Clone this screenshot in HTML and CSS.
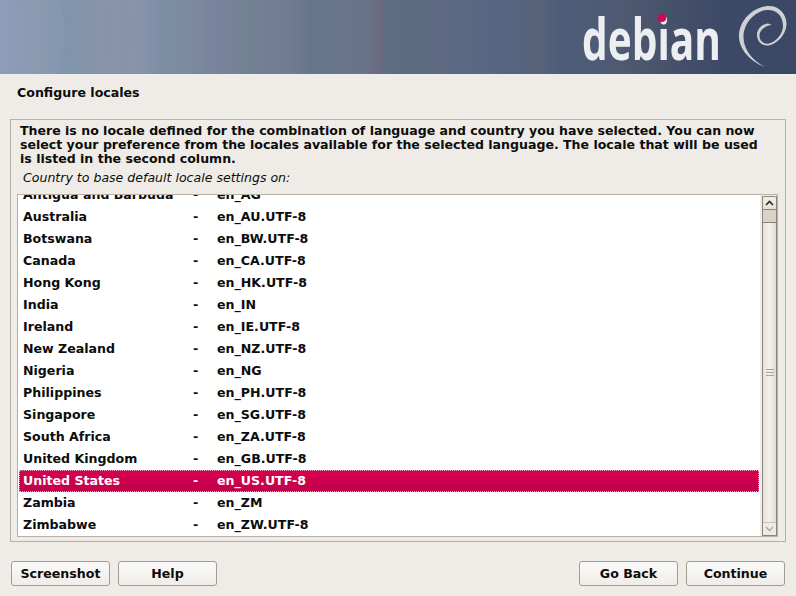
FILE: index.html
```html
<!DOCTYPE html>
<html lang="en">
<head>
<meta charset="utf-8">
<title>Configure locales</title>
<link rel="stylesheet" href="styles.css">
</head>
<body>
<div class="app">
  <header class="banner">
    <div class="bands"></div>
    <svg class="logo" width="220" height="74" viewBox="0 0 220 74" role="img" aria-label="debian">
      <text class="wordmark" x="6" y="60" textLength="139" lengthAdjust="spacingAndGlyphs">debian</text>
      <circle cx="86" cy="18" r="4" fill="#d0074f"/>
      <path class="swirl" d="M189 67C175 62 163.500 50 163 37C162.500 22 175 8 191 6C202 5 210.500 13 210.500 24C210.500 33 203 43 193 45.500C186 46.500 181 41 181 35C181 29 186 24 192 23.500L196 25C191 25 184 29 183.500 35C183 41 188 44.500 193 43.500C201 41.500 207.500 33 207 25C206.500 15 200 9.500 191 10C178 11 167.500 24 167.500 37C167.500 50 177 61 189 67Z"/>
    </svg>
  </header>
  <div class="stripe"></div>
  <h1 class="title">Configure locales</h1>
  <main class="frame">
    <p class="message">There is no locale defined for the combination of language and country you have selected. You can now select your preference from the locales available for the selected language. The locale that will be used is listed in the second column.</p>
    <p class="prompt">Country to base default locale settings on:</p>
    <div class="listbox">
      <div class="viewport">
        <div class="rows">
          <div class="row"><span class="country">Antigua and Barbuda</span><span class="dash">-</span><span>en_AG</span></div>
          <div class="row"><span class="country">Australia</span><span class="dash">-</span><span>en_AU.UTF-8</span></div>
          <div class="row"><span class="country">Botswana</span><span class="dash">-</span><span>en_BW.UTF-8</span></div>
          <div class="row"><span class="country">Canada</span><span class="dash">-</span><span>en_CA.UTF-8</span></div>
          <div class="row"><span class="country">Hong Kong</span><span class="dash">-</span><span>en_HK.UTF-8</span></div>
          <div class="row"><span class="country">India</span><span class="dash">-</span><span>en_IN</span></div>
          <div class="row"><span class="country">Ireland</span><span class="dash">-</span><span>en_IE.UTF-8</span></div>
          <div class="row"><span class="country">New Zealand</span><span class="dash">-</span><span>en_NZ.UTF-8</span></div>
          <div class="row"><span class="country">Nigeria</span><span class="dash">-</span><span>en_NG</span></div>
          <div class="row"><span class="country">Philippines</span><span class="dash">-</span><span>en_PH.UTF-8</span></div>
          <div class="row"><span class="country">Singapore</span><span class="dash">-</span><span>en_SG.UTF-8</span></div>
          <div class="row"><span class="country">South Africa</span><span class="dash">-</span><span>en_ZA.UTF-8</span></div>
          <div class="row"><span class="country">United Kingdom</span><span class="dash">-</span><span>en_GB.UTF-8</span></div>
          <div class="row selected"><span class="country">United States</span><span class="dash">-</span><span>en_US.UTF-8</span></div>
          <div class="row"><span class="country">Zambia</span><span class="dash">-</span><span>en_ZM</span></div>
          <div class="row"><span class="country">Zimbabwe</span><span class="dash">-</span><span>en_ZW.UTF-8</span></div>
        </div>
      </div>
      <div class="gutter">
        <div class="scrollbar">
          <div class="step step-up">
            <svg width="9" height="6" viewBox="0 0 9 6"><path d="M1 5L4.500 1.500L8 5" class="arrow"/></svg>
          </div>
          <div class="trough"></div>
          <div class="thumb">
            <span class="grip"></span><span class="grip"></span><span class="grip"></span>
          </div>
          <div class="step step-down">
            <svg width="9" height="6" viewBox="0 0 9 6"><path d="M1 1L4.500 4.500L8 1" class="arrow-dim"/></svg>
          </div>
        </div>
      </div>
    </div>
  </main>
  <footer class="actions">
    <button class="btn" type="button">Screenshot</button>
    <button class="btn" type="button">Help</button>
    <button class="btn push" type="button">Go Back</button>
    <button class="btn" type="button">Continue</button>
  </footer>
</div>
</body>
</html>
```
FILE: styles.css
```css
* { box-sizing: border-box; }
html, body { margin: 0; padding: 0; }
body {
  background: #efece7;
  font-family: "DejaVu Sans", sans-serif;
  font-size: 12.6px;
  font-weight: 700;
  color: #0c0c0c;
}
.app { width: 796px; height: 596px; display: flex; flex-direction: column; overflow: hidden; }

.banner {
  position: relative;
  flex: none;
  height: 74px;
  display: flex;
  justify-content: flex-end;
  overflow: hidden;
  background: linear-gradient(90deg,
    #8c9bb8 0, #8a99b0 40px, #8197ae 68px, #8a94a9 110px, #8590aa 145px, #7a8ca1 165px,
    #7a8b9d 190px, #7a829d 215px, #738393 240px, #717b94 290px, #667689 310px, #687389 370px,
    #6b6a80 378px, #5e6d80 388px, #5d6a82 440px, #566581 500px, #59637a 540px, #4d5d78 560px,
    #4f5a72 620px, #444f69 680px, #3d4a67 720px, #3a4865 796px);
}
.bands {
  position: absolute;
  inset: 0;
  background: radial-gradient(circle at -20px 34px,
    rgba(255,255,255,.03) 0, rgba(255,255,255,0) 84px,
    rgba(0,0,0,.02) 86px, rgba(0,0,0,0) 150px,
    rgba(255,255,255,.02) 152px, rgba(255,255,255,0) 220px);
}
.logo { position: relative; flex: none; }
.wordmark {
  font-family: "Open Sans", sans-serif;
  font-size: 58px;
  font-weight: 700;
  fill: #eceef1;
}
.swirl { fill: #cfd0d3; }

.stripe { flex: none; height: 2px; background: #ecedec; }
.title {
  flex: none;
  height: 43px;
  margin: 0;
  padding: 10px 0 0 17px;
  font-size: 12.6px;
  line-height: 14px;
  font-weight: 700;
}

.frame {
  flex: none;
  height: 423px;
  margin: 0 10px;
  padding: 4px 7px 4px 6px;
  border: 1px solid #b8b0a4;
  display: flex;
  flex-direction: column;
}
.message {
  margin: 0;
  padding: 0 0 0 3px;
  width: 750px;
  font-size: 12.56px;
  line-height: 14px;
}
.prompt {
  margin: 3px 0 0;
  padding-left: 6px;
  height: 25px;
  font-size: 12.56px;
  font-style: italic;
  font-weight: 400;
  line-height: 18px;
}
.listbox {
  flex: 1;
  border: 1px solid #b8b0a4;
  display: flex;
  overflow: hidden;
  min-height: 0;
}
.viewport { flex: 1; background: #fff; overflow: hidden; min-width: 0; }
.rows { margin-top: -12px; padding: 0 1px; }
.row {
  display: flex;
  height: 22px;
  align-items: center;
  padding-left: 4px;
  white-space: nowrap;
}
.country { width: 170px; }
.dash { width: 24px; }
.selected {
  margin: 1px 0 -1px;
  padding-bottom: 2px;
  background: linear-gradient(#d8004f, #c2004a);
  color: #fff;
  outline: 1px dotted #f0a8c2;
  outline-offset: -1px;
}

.gutter {
  flex: none;
  width: 17px;
  padding: 1px 0 0 2px;
  display: flex;
}
.scrollbar {
  flex: 1;
  display: flex;
  flex-direction: column;
  border-right: 1px solid #8b8478;
  border-left: 1px solid #8b8478;
  background: #d8d2c8;
}
.step {
  flex: none;
  height: 14px;
  display: flex;
  align-items: center;
  justify-content: center;
  background: linear-gradient(#f2efeb, #e2ded7);
  border-top: 1px solid #8b8478;
}
.step-up { border-top-left-radius: 2px; border-top-right-radius: 2px; border-bottom: 1px solid #8b8478; }
.step-down { background: #eeeae5; border-top: 1px solid #c7c1b7; border-bottom: 1px solid #8b8478; }
.arrow { fill: none; stroke: #2c2a27; stroke-width: 1.6; }
.arrow-dim { fill: none; stroke: #b0aaa0; stroke-width: 1.4; }
.trough { flex: none; height: 12px; }
.thumb {
  flex: 1;
  display: flex;
  flex-direction: column;
  align-items: center;
  justify-content: center;
  gap: 1px;
  background: linear-gradient(90deg, #e4dfda, #f4f1ee 50%, #dfdad4);
  border-top: 1px solid #8b8478;
}
.grip { display: block; width: 8px; height: 1px; margin-bottom: 1px; background: #a8a299; }

.actions {
  flex: none;
  display: flex;
  gap: 8px;
  padding: 19px 11px 0;
}
.btn {
  width: 99px;
  height: 25px;
  padding: 0;
  border: 1px solid #a39c90;
  border-radius: 3px;
  background: linear-gradient(#fafafa, #f0ede8);
  font-family: inherit;
  font-size: 12.6px;
  font-weight: 700;
  color: #0c0c0c;
}
.push { margin-left: auto; }
```
